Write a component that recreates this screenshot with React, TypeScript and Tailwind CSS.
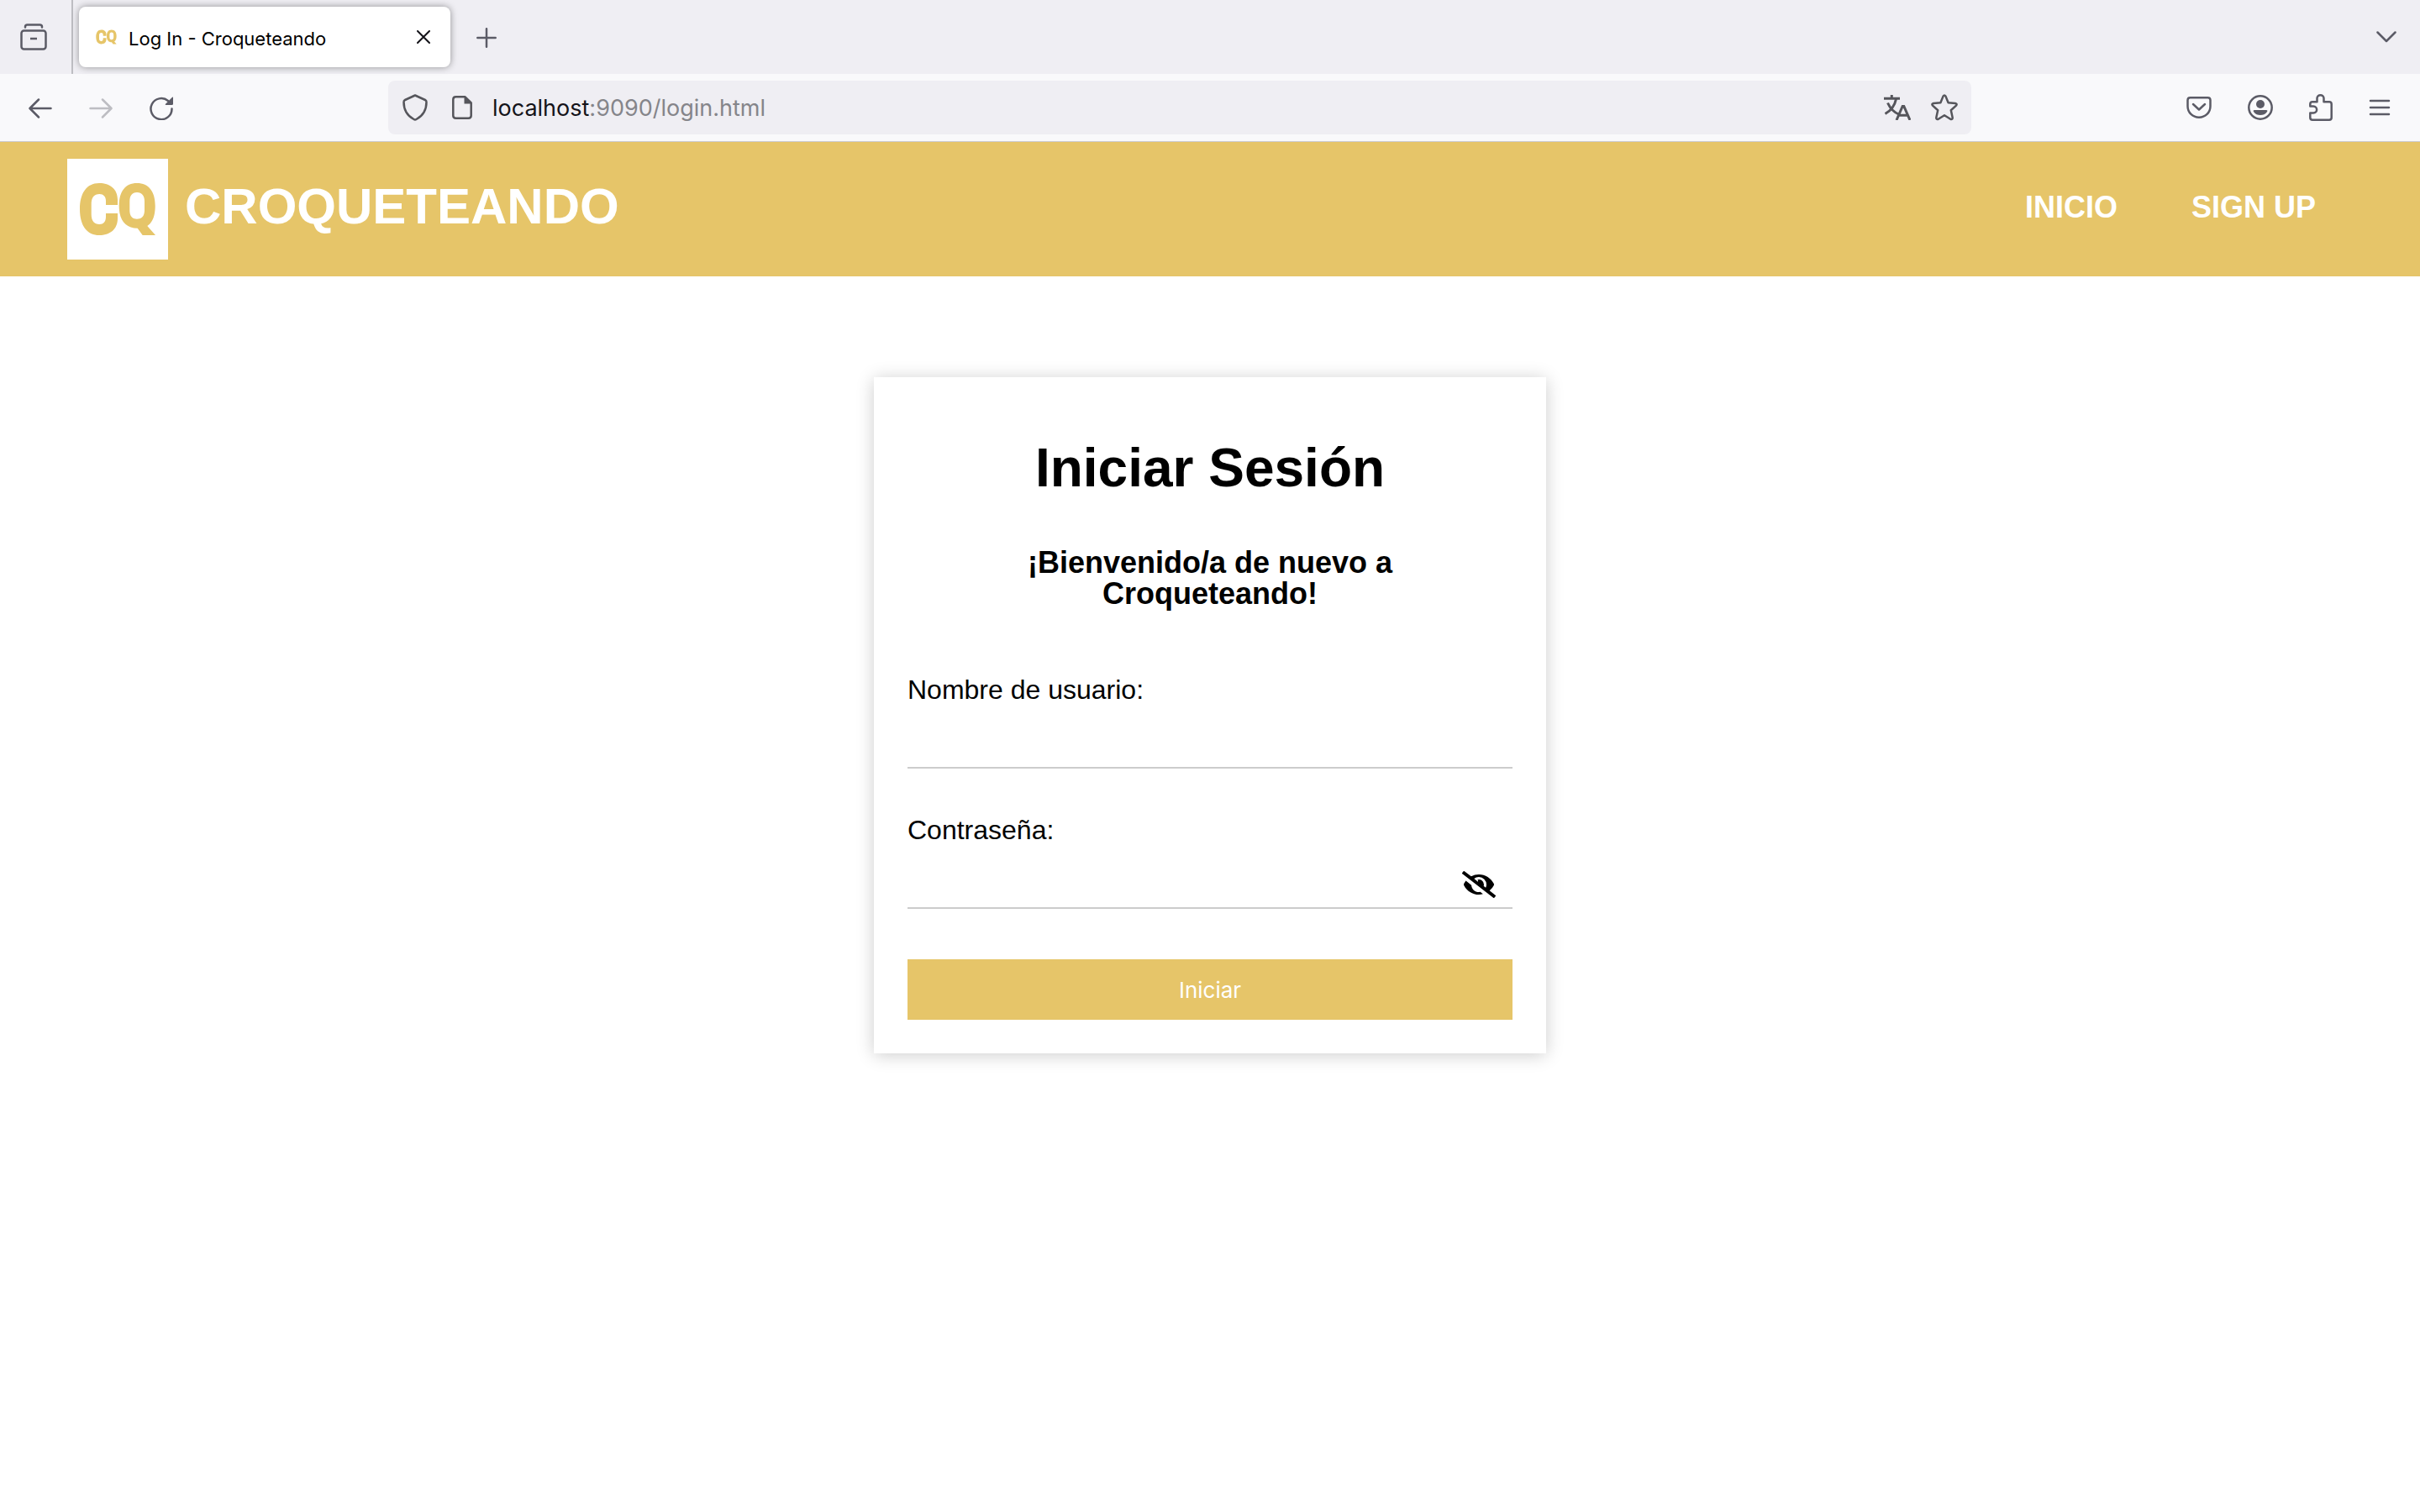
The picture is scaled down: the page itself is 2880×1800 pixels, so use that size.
import React, { useState } from "react";
import { FaEyeSlash } from "react-icons/fa";

type IconProps = { className?: string };

const stroke = {
  fill: "none",
  stroke: "currentColor",
  strokeLinecap: "round" as const,
  strokeLinejoin: "round" as const,
};

function CqLogo({ className, viewBox }: IconProps & { viewBox: string }) {
  return (
    <svg viewBox={viewBox} className={className} aria-hidden="true" fill="#e6c569" fillRule="evenodd">
      <path d="M60 55 V49 C60 36 51 29 38 29 C23 29 15 41 15 60 C15 79 23 91 38 91 C51 91 60 84 60 71 V65 H46 V69 C46 75 43 78 38.500 78 C32 78 28.700 74 28.700 66 V54 C28.700 46 32 42 38.500 42 C43 42 46 45 46 50 V55 Z" />
      <path d="M83 29 C69 29 61.700 39 61.700 56 C61.700 73 69 82.700 83.700 82.700 L89.700 91 H105 L95.300 80 C101.500 76 104.700 68 104.700 56 C104.700 39 97 29 83 29 Z M83 40 C89 40 92 44 92 51 V61 C92 68 89 71.700 83 71.700 C77 71.700 74.300 68 74.300 61 V51 C74.300 44 77 40 83 40 Z" />
    </svg>
  );
}

function TabStrip() {
  return (
    <div className="flex h-22 items-stretch bg-[#efeef3] text-[#5b5b66]">
      <button type="button" aria-label="Firefox View" className="flex w-[85px] items-center pl-6">
        <svg viewBox="0 0 32 32" className="size-8" {...stroke} strokeWidth="2.500">
          <path d="M6 4.500 V4 Q6 1.500 8.500 1.500 H23.500 Q26 1.500 26 4 V4.500" />
          <rect x="1.500" y="8.500" width="29" height="22" rx="3" />
          <path d="M12 18 H20" strokeLinecap="butt" />
        </svg>
      </button>
      <div className="w-0.5 bg-[#bdbdc2]" />
      <div className="my-2 ml-[7px] flex w-[442px] items-center rounded-lg bg-white pr-6 pl-5 text-[#15141a] shadow-[0_0_8px_rgba(0,0,0,0.4)]">
        <CqLogo viewBox="14 27 92 66" className="h-[18px] w-[25px]" />
        <span className="ml-3.5 flex-1 pt-1 text-[22px] leading-8 text-black">Log In - Croqueteando</span>
        <button type="button" aria-label="Cerrar pestaña">
          <svg viewBox="0 0 16 16" className="size-4" {...stroke} strokeWidth="2">
            <path d="M1 1 L15 15 M15 1 L1 15" />
          </svg>
        </button>
      </div>
      <button type="button" aria-label="Nueva pestaña" className="ml-[31px] pt-0.5">
        <svg viewBox="0 0 24 24" className="size-6" {...stroke} strokeWidth="2.500">
          <path d="M12 1.300 V22.700 M1.300 12 H22.700" />
        </svg>
      </button>
      <button type="button" aria-label="Listar pestañas" className="mr-7 ml-auto">
        <svg viewBox="0 0 24 14" className="h-3.5 w-6" {...stroke} strokeWidth="2.500">
          <path d="M1.500 1.500 L12 12 L22.500 1.500" />
        </svg>
      </button>
    </div>
  );
}

function Toolbar() {
  return (
    <div className="flex h-[81px] items-center border-b border-[#cccccf] bg-[#f9f9fb] pl-[34px] text-[#5b5b66]">
      <div className="flex w-[428px] items-center gap-11 pt-0.5">
        <button type="button" aria-label="Atrás">
          <svg viewBox="0 0 28 24" className="h-6 w-7" {...stroke} strokeWidth="2.500">
            <path d="M26.500 12 H2 M12 1.500 L1.500 12 L12 22.500" />
          </svg>
        </button>
        <button type="button" aria-label="Adelante" disabled className="text-[#bdbdc2]">
          <svg viewBox="0 0 28 24" className="h-6 w-7" {...stroke} strokeWidth="2.500">
            <path d="M1.500 12 H26 M16 1.500 L26.500 12 L16 22.500" />
          </svg>
        </button>
        <button type="button" aria-label="Recargar">
          <svg viewBox="0 0 28 28" className="size-7" {...stroke} strokeWidth="2.500">
            <path d="M26.500 14.500 A12.500 12.500 0 1 1 22 5" />
            <path d="M28 0.500 V8.500 Q28 10 26.500 10 H19.500 Q18 10 19 8.800 L27 0.800 Z" fill="currentColor" stroke="none" />
          </svg>
        </button>
      </div>
      <div className="flex h-16 flex-1 items-center rounded-lg bg-[#efeef3] pr-4 pl-[17px] text-[#55555b]">
        <svg viewBox="0 0 30 32" className="h-8 w-[30px]" {...stroke} strokeWidth="2.500">
          <path d="M15 1.500 L27 7 Q28.500 7.700 28.500 9.500 C28.500 19 24 26 16.500 30 Q15 31 13.500 30 C6 26 1.500 19 1.500 9.500 Q1.500 7.700 3 7 Z" />
        </svg>
        <svg viewBox="0 0 24 28" className="ml-[29px] h-7 w-6" {...stroke} strokeWidth="2.500">
          <path d="M4.500 1.300 H15.500 L22.700 8.500 V23.500 Q22.700 26.700 19.500 26.700 H4.500 Q1.300 26.700 1.300 23.500 V4.500 Q1.300 1.300 4.500 1.300 Z" />
          <path d="M14.500 1 V9.500 H23 Z" fill="currentColor" stroke="none" />
        </svg>
        <p className="ml-6 flex-1 pt-0.5 text-[27px] leading-10 text-[#85858a]">
          <span className="text-[#15141a]">localhost</span>:9090/login.html
        </p>
        <button type="button" aria-label="Traducir página">
          <svg viewBox="0 0 32 30" className="h-[30px] w-8" fill="none" stroke="currentColor" strokeWidth="3">
            <path d="M0 4.300 H19 M9.300 0 V4 M4.500 9.500 C7 15 11 20 17.500 23 M14.500 5 C13 12 8 19 1.500 22.500" />
            <path d="M15 30 L22.200 13.500 H23.800 L31 30 M17.500 24.300 H28.500" />
          </svg>
        </button>
        <button type="button" aria-label="Añadir a marcadores" className="ml-6">
          <svg viewBox="0 0 32 32" className="size-8" {...stroke} strokeWidth="2.500">
            <path d="M14.600 2.400 Q16 0.400 17.400 2.400 L20.600 10.300 L29 11 Q31.600 11.600 30 13.600 L23.800 19.200 L25.700 28 Q25.800 30.800 23.200 29.800 L16 25.300 L8.800 29.800 Q6.200 30.800 6.300 28 L8.200 19.200 L2 13.600 Q0.400 11.600 3 11 L11.400 10.300 Z" />
          </svg>
        </button>
      </div>
      <div className="flex w-[534px] items-center justify-end gap-[43px] pr-[35px]">
        <button type="button" aria-label="Pocket">
          <svg viewBox="0 0 30 26" className="h-[26px] w-[30px]" {...stroke} strokeWidth="2.500">
            <path d="M4.500 1.300 H25.500 Q28.500 1.300 28.500 4.300 V11.500 C28.500 19 22.500 24.700 15 24.700 C7.500 24.700 1.500 19 1.500 11.500 V4.300 Q1.500 1.300 4.500 1.300 Z M8 9 L15 15.500 L22 9" />
          </svg>
        </button>
        <button type="button" aria-label="Cuenta">
          <svg viewBox="0 0 30 30" className="size-[30px]" {...stroke} strokeWidth="2.500">
            <circle cx="15" cy="15" r="13.700" />
            <circle cx="15" cy="11" r="5" fill="currentColor" stroke="none" />
            <path d="M8 18 H22 Q24 18 23 20 C21 23 18 24 15 24 C12 24 9 23 7 20 Q6 18 8 18 Z" fill="currentColor" stroke="none" />
          </svg>
        </button>
        <button type="button" aria-label="Extensiones">
          <svg viewBox="0 0 28 32" className="h-8 w-7" {...stroke} strokeWidth="2.500">
            <path d="M1.300 14.500 V12 Q1.300 9.300 4 9.300 H9.500 V5 C9.500 0 17.500 0 17.500 5 V9.300 H24 Q26.700 9.300 26.700 12 V28 Q26.700 30.700 24 30.700 H4 Q1.300 30.700 1.300 28 V22.500 H5 C10.500 22.500 10.500 14.500 5 14.500 Z" />
          </svg>
        </button>
        <button type="button" aria-label="Menú">
          <svg viewBox="0 0 26 20" className="h-5 w-[26px]" {...stroke} strokeWidth="2.500">
            <path d="M2 2 H24 M2 10 H24 M2 18 H24" />
          </svg>
        </button>
      </div>
    </div>
  );
}

function SiteHeader() {
  return (
    <header className="flex items-start justify-between bg-[#e6c569] px-20 py-5 font-['Liberation_Sans',Arial,sans-serif] font-bold text-white">
      <a href="#inicio" className="flex items-start gap-5">
        <CqLogo viewBox="0 0 120 120" className="size-30 bg-white" />
        <span className="text-[60px] leading-[114px]">CROQUETEANDO</span>
      </a>
      <nav className="flex gap-[88px] pr-11 text-[36px] leading-[116px]">
        <a href="#inicio">INICIO</a>
        <a href="#signup">SIGN UP</a>
      </nav>
    </header>
  );
}

function LoginCard() {
  const [visible, setVisible] = useState(false);
  return (
    <form
      onSubmit={(e) => e.preventDefault()}
      className="mx-auto mt-30 w-[800px] bg-white p-10 font-['Liberation_Sans',Arial,sans-serif] text-black shadow-[0_2px_20px_rgba(0,0,0,0.2)]"
    >
      <h1 className="mt-7 text-center text-[64px] leading-[80px] font-bold">Iniciar Sesión</h1>
      <h2 className="mx-auto mt-[54px] w-[480px] text-center text-[36px] leading-[37px] font-bold">
        ¡Bienvenido/a de nuevo a Croqueteando!
      </h2>
      <div className="mt-[76px] flex flex-col">
        <label htmlFor="usuario" className="text-[32px] leading-10">
          Nombre de usuario:
        </label>
        <input id="usuario" type="text" className="mt-2 h-[66px] border-b-2 border-[#ccc] px-2 text-[28px] outline-none" />
      </div>
      <div className="mt-[53px] flex flex-col">
        <label htmlFor="clave" className="text-[32px] leading-10">
          Contraseña:
        </label>
        <div className="mt-2 flex h-[66px] items-end border-b-2 border-[#ccc] pr-5">
          <input id="clave" type={visible ? "text" : "password"} className="h-full min-w-0 flex-1 px-2 text-[28px] outline-none" />
          <button type="button" aria-label="Mostrar contraseña" className="pb-[11px]" onClick={() => setVisible(!visible)}>
            <FaEyeSlash className="h-8 w-10" />
          </button>
        </div>
      </div>
      <button type="submit" className="mt-15 h-18 w-full bg-[#e6c569] font-[Inter,sans-serif] text-[26px] text-white">
        Iniciar
      </button>
    </form>
  );
}

export default function App() {
  return (
    <div className="min-h-screen bg-white font-[Inter,sans-serif]">
      <TabStrip />
      <Toolbar />
      <SiteHeader />
      <main>
        <LoginCard />
      </main>
    </div>
  );
}
